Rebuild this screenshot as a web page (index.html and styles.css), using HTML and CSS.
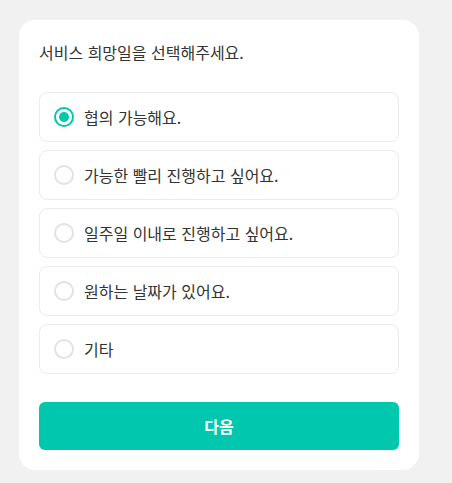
FILE: index.html
```html
<!DOCTYPE html>
<html lang="ko">
<head>
<meta charset="utf-8">
<link rel="stylesheet" href="styles.css">
</head>
<body>
<div class="card">
  <p class="title">서비스 희망일을 선택해주세요.</p>
  <div class="options">
    <label class="option selected"><span class="radio"></span><span class="label">협의 가능해요.</span></label>
    <label class="option"><span class="radio"></span><span class="label">가능한 빨리 진행하고 싶어요.</span></label>
    <label class="option"><span class="radio"></span><span class="label">일주일 이내로 진행하고 싶어요.</span></label>
    <label class="option"><span class="radio"></span><span class="label">원하는 날짜가 있어요.</span></label>
    <label class="option"><span class="radio"></span><span class="label">기타</span></label>
  </div>
  <button class="next">다음</button>
</div>
</body>
</html>
```

FILE: styles.css
```css
* { box-sizing: border-box; }
html, body { margin: 0; padding: 0; }
body {
  background: #f1f1f1;
  font-family: "Noto Sans CJK KR", "Noto Sans", sans-serif;
  color: #333;
  padding: 20px 0 0 19px;
  height: 483px;
}
.card {
  width: 400px;
  background: #fff;
  border-radius: 16px;
  padding: 20px 20px 20px 20px;
}
.title {
  margin: 0;
  font-size: 16px;
  line-height: 24px;
  color: #333;
}
.options {
  display: flex;
  flex-direction: column;
  gap: 8px;
  margin-top: 28px;
}
.option {
  display: flex;
  align-items: center;
  height: 50px;
  border: 1px solid #ebebeb;
  border-radius: 8px;
  padding-left: 14px;
  gap: 10px;
}
.radio {
  width: 20px;
  height: 20px;
  border-radius: 50%;
  border: 2px solid #e2e2e2;
  display: flex;
  align-items: center;
  justify-content: center;
}
.selected .radio { border-color: #00c7ae; }
.selected .radio::after {
  content: "";
  width: 10px;
  height: 10px;
  border-radius: 50%;
  background: #00c7ae;
}
.label {
  font-size: 16px;
  color: #333;
}
.next {
  display: block;
  width: 360px;
  height: 48px;
  margin-top: 28px;
  border: none;
  border-radius: 6px;
  background: #00c7ae;
  color: #fff;
  font-family: inherit;
  font-size: 16px;
  font-weight: 700;
}
```
